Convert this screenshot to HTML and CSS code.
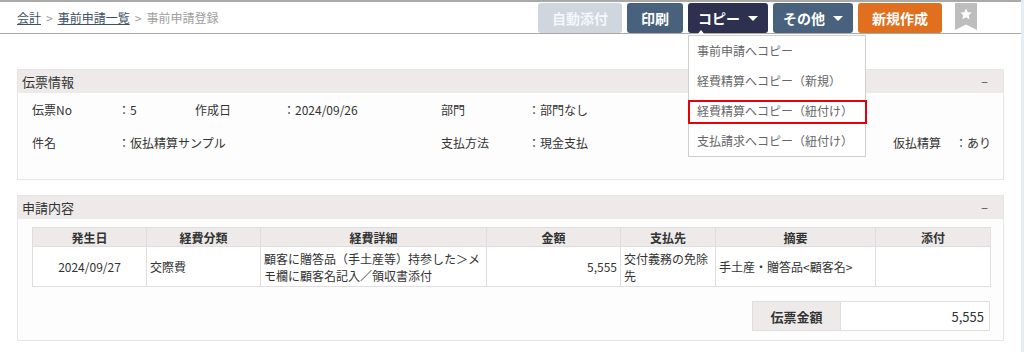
FILE: index.html
```html
<!DOCTYPE html>
<html lang="ja">
<head>
<meta charset="utf-8">
<title>事前申請登録</title>
<link rel="stylesheet" href="styles.css">
</head>
<body>
<div class="app">
  <header class="topbar">
    <nav class="crumbs">
      <a class="crumb-link" href="#">会計</a>
      <span class="sep">&gt;</span>
      <a class="crumb-link" href="#">事前申請一覧</a>
      <span class="sep">&gt;</span>
      <span class="crumb-current">事前申請登録</span>
    </nav>
    <div class="actions">
      <button class="btn btn-disabled w84">自動添付</button>
      <button class="btn btn-slate w56">印刷</button>
      <div class="dd-wrap">
        <button class="btn btn-navy w80">コピー<span class="caret"></span></button>
        <span class="dd-pointer"></span>
        <ul class="dropdown">
          <li class="dd-item">事前申請へコピー</li>
          <li class="dd-item">経費精算へコピー（新規）</li>
          <li class="dd-item dd-marked">経費精算へコピー（紐付け）<span class="mark"></span></li>
          <li class="dd-item">支払請求へコピー（紐付け）</li>
        </ul>
      </div>
      <button class="btn btn-slate w80">その他<span class="caret"></span></button>
      <button class="btn btn-orange w84">新規作成</button>
      <div class="bookmark">
        <svg width="14" height="14" viewBox="0 0 24 24"><path fill="#fff" d="M12 2.5l2.9 6.3 6.8.7-5.1 4.6 1.5 6.8L12 17.4l-6.1 3.5 1.5-6.8-5.1-4.6 6.8-.7z"/></svg>
      </div>
    </div>
  </header>

  <main class="content">
    <section class="panel panel-info">
      <div class="panel-head"><span class="panel-title">伝票情報</span><span class="collapse">−</span></div>
      <div class="panel-body">
        <div class="info-row">
          <span class="lbl">伝票No</span><span class="val">：5</span>
          <span class="lbl">作成日</span><span class="val">：2024/09/26</span>
          <span class="lbl">部門</span><span class="val">：部門なし</span>
        </div>
        <div class="info-row">
          <span class="lbl">件名</span><span class="val val-wide">：仮払精算サンプル</span>
          <span class="lbl">支払方法</span><span class="val val-long">：現金支払</span>
          <span class="lbl">仮払精算</span><span class="val">：あり</span>
        </div>
      </div>
    </section>

    <section class="panel panel-detail">
      <div class="panel-head"><span class="panel-title">申請内容</span><span class="collapse">−</span></div>
      <div class="panel-body">
        <table class="grid">
          <colgroup>
            <col class="c1"><col class="c2"><col class="c3"><col class="c4"><col class="c5"><col class="c6"><col class="c7">
          </colgroup>
          <thead>
            <tr><th>発生日</th><th>経費分類</th><th>経費詳細</th><th>金額</th><th>支払先</th><th>摘要</th><th>添付</th></tr>
          </thead>
          <tbody>
            <tr>
              <td class="center">2024/09/27</td>
              <td>交際費</td>
              <td>顧客に贈答品（手土産等）持参した＞メモ欄に顧客名記入／領収書添付</td>
              <td class="right">5,555</td>
              <td>交付義務の免除先</td>
              <td>手土産・贈答品&lt;顧客名&gt;</td>
              <td></td>
            </tr>
          </tbody>
        </table>
        <div class="total-row">
          <div class="total">
            <span class="total-lbl">伝票金額</span>
            <span class="total-val">5,555</span>
          </div>
        </div>
      </div>
    </section>
  </main>
</div>
</body>
</html>
```

FILE: styles.css
```css
* { box-sizing: border-box; }
html, body { margin: 0; padding: 0; }
body {
  background: #e4edf8;
  font-family: "Noto Sans CJK JP", "Noto Sans", sans-serif;
  font-size: 12px;
  color: #333;
  height: 352px;
  overflow: hidden;
}
.app {
  width: 1021px;
  height: 352px;
  background: #fff;
}

/* top bar */
.topbar {
  height: 34px;
  border-top: 2px solid #a9a9a9;
  border-bottom: 1px solid #a9a9a9;
  display: flex;
  justify-content: space-between;
  align-items: flex-start;
  padding-left: 17px;
  position: relative;
  z-index: 5;
}
.crumbs {
  display: flex;
  align-items: center;
  height: 30px;
  font-size: 12px;
  gap: 5px;
}
.crumb-link { color: #3e5066; text-decoration: underline; text-decoration-color: #3e5066; }
.sep { color: #9a9a9a; }
.crumb-current { color: #a0a0a0; }

.actions {
  display: flex;
  align-items: flex-start;
  gap: 5px;
  padding-top: 1px;
  margin-right: 44px;
}
.btn {
  height: 30px;
  border: none;
  border-radius: 3px;
  color: #fff;
  font-family: "Noto Sans CJK JP", "Noto Sans", sans-serif;
  font-weight: bold;
  font-size: 14px;
  display: flex;
  align-items: center;
  justify-content: center;
  padding: 0;
  cursor: pointer;
}
.w84 { width: 84px; }
.w80 { width: 80px; }
.w56 { width: 56px; }
.btn-disabled { background: #cfd6de; color: #f4f6f8; }
.btn-slate { background: #48627e; }
.btn-navy { background: #2e3050; }
.btn-orange { background: #e07020; }
.caret {
  display: inline-block;
  width: 0; height: 0;
  border-left: 5px solid transparent;
  border-right: 5px solid transparent;
  border-top: 5px solid #fff;
  margin-left: 8px;
}
.bookmark {
  width: 22px;
  height: 27px;
  margin-left: 8px;
  background: #bdbdbd;
  clip-path: polygon(0 0, 100% 0, 100% 100%, 50% 80%, 0 100%);
  display: flex;
  justify-content: center;
  padding-top: 4px;
}

/* dropdown */
.dd-wrap { position: relative; }
.dd-pointer {
  position: absolute;
  left: 9px;
  top: 27px;
  width: 0; height: 0;
  border-left: 4px solid transparent;
  border-right: 4px solid transparent;
  border-bottom: 5px solid #fff;
}
.dropdown {
  position: absolute;
  left: 0;
  top: 32px;
  width: 178px;
  margin: 0;
  padding: 0;
  list-style: none;
  background: #fff;
  border: 1px solid #cfcfcf;
}
.dd-item {
  height: 30px;
  line-height: 30px;
  padding-left: 8px;
  color: #666;
  font-size: 12px;
  white-space: nowrap;
  position: relative;
}
.mark {
  position: absolute;
  left: -1px;
  right: -2px;
  top: 4px;
  height: 24px;
  border: 2px solid #e8000b;
}

/* content */
.content {
  padding: 35px 17px 0 17px;
  display: flex;
  flex-direction: column;
  gap: 15px;
}
.panel {
  width: 987px;
  border: 1px solid #e6e6e6;
  background: #fdfdfd;
}
.panel-head {
  height: 23px;
  background: #eeeaea;
  display: flex;
  justify-content: space-between;
  align-items: center;
  padding: 0 15px 0 4px;
}
.panel-title { font-size: 13px; color: #333; }
.collapse { font-size: 12px; color: #555; }

.panel-info .panel-body { padding: 0 14px 20px 14px; }
.info-row {
  display: grid;
  grid-template-columns: 86px 77px 88px 158px 87px 365px 62px auto;
  height: 33px;
  align-items: center;
}
.info-row .lbl, .info-row .val { white-space: nowrap; }
.val-wide { grid-column: span 3; }
.val-long { grid-column: span 1; }

.panel-detail .panel-body { padding: 8px 13px 9px 14px; }
.grid {
  width: 958px;
  border-collapse: collapse;
  table-layout: fixed;
  font-size: 12px;
}
.c1 { width: 114px; }
.c2 { width: 114px; }
.c3 { width: 226px; }
.c4 { width: 134px; }
.c5 { width: 95px; }
.c6 { width: 160px; }
.c7 { width: 115px; }
.grid th {
  background: #eeeaea;
  border: 1px solid #dedede;
  height: 19px;
  font-weight: bold;
  color: #333;
  text-align: center;
  padding: 0;
  line-height: 17px;
}
.grid td {
  border: 1px solid #dedede;
  background: #fff;
  height: 40px;
  padding: 2px 3px;
  line-height: 17px;
  vertical-align: middle;
  color: #333;
}
.grid td.center { text-align: center; }
.grid td.right { text-align: right; }

.total-row {
  display: flex;
  justify-content: flex-end;
  margin-top: 14px;
}
.total {
  display: flex;
  width: 238px;
  height: 30px;
  border: 1px solid #dedede;
  background: #fff;
}
.total-lbl {
  width: 88px;
  background: #eeeaea;
  border-right: 1px solid #dedede;
  font-weight: bold;
  display: flex;
  align-items: center;
  justify-content: center;
  font-size: 13px;
}
.total-val {
  flex: 1;
  display: flex;
  align-items: center;
  justify-content: flex-end;
  padding-right: 5px;
  font-size: 13px;
}
```
